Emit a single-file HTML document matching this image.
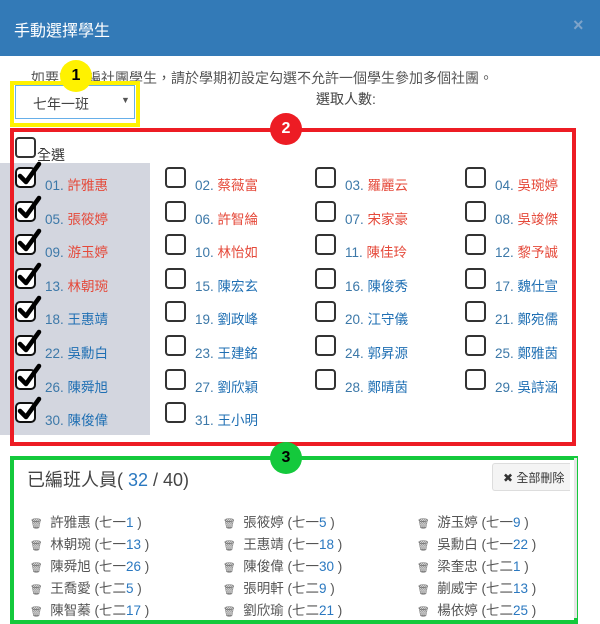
<!DOCTYPE html>
<html><head><meta charset="utf-8"><style>
body{margin:0;width:600px;height:624px;overflow:hidden;background:#fff;font-family:"Liberation Sans","Noto Sans CJK TC",sans-serif;position:relative}
.a{position:absolute}
.hd{left:0;top:0;width:600px;height:56px;background:#337ab7;color:#fff;font-size:16px}
.cb{position:absolute;width:17px;height:17px;border:2px solid #333;border-radius:4px;background:#fff}
.lab{position:absolute;font-size:13.5px;color:#3c78a8;white-space:nowrap}
.r{color:#e5493a}.b{color:#1f6fb3}
.li{position:absolute;font-size:13.5px;color:#555;white-space:nowrap}
.li i{font-style:normal;color:#2a78c0}
.circ{position:absolute;width:32px;height:32px;border-radius:50%;text-align:center;line-height:32px;font-weight:bold;font-size:16px;color:#000}
</style></head><body>
<div class="a hd"><div class="a" style="left:14px;top:17px">手動選擇學生</div><div class="a" style="left:573px;top:15px;color:#7ea3c9;font-size:18px;font-weight:bold">×</div></div>
<div class="a" style="left:31px;top:68px;font-size:14px;color:#555;white-space:nowrap">如要重覆編社團學生，請於學期初設定勾選不允許一個學生參加多個社團。</div>
<div class="a" style="left:10px;top:81px;width:122px;height:38px;border:4px solid #fff200"></div>
<div class="a" style="left:15px;top:85px;width:118px;height:32px;border:1px solid #66afe9;background:#fff"></div>
<div class="a" style="left:33px;top:94px;font-size:14px;color:#444">七年一班</div>
<div class="a" style="left:121px;top:95px;font-size:9px;color:#555">▼</div>
<div class="a" style="left:316px;top:89px;font-size:14px;color:#444">選取人數:</div>
<div class="circ" style="left:60px;top:60px;background:#fff200">1</div>
<div class="a" style="left:0;top:163px;width:150px;height:272px;background:#d3d6df"></div>
<div class="a" style="left:10px;top:128px;width:558px;height:310px;border:4px solid #ed1c24"></div>
<div class="circ" style="left:270px;top:113px;background:#ed1c24;color:#fff">2</div>
<div class="cb" style="left:15px;top:137px"></div><div class="a" style="left:37px;top:145px;font-size:14px;color:#333">全選</div>
<div id="g"></div>
<div class="a" style="left:10px;top:456px;width:560px;height:160px;border:4px solid #14c93c"></div>
<div class="a" style="left:574px;top:458px;width:3px;height:160px;background:#e6e6e6"></div>
<div class="circ" style="left:270px;top:442px;background:#14c93c">3</div>
<div class="a" style="left:27px;top:466px;font-size:18px;color:#444">已編班人員( <span style="color:#2a78c0">32</span> / 40)</div>
<div class="a" style="left:492px;top:463px;width:78px;height:28px;border:1px solid #ddd;border-right:none;border-radius:3px 0 0 3px;background:#f4f4f4;font-size:12px;color:#333;line-height:28px;padding-left:10px;box-sizing:border-box">✖ 全部刪除</div>
<div id="l"></div>
<script>
var n=["許雅惠","蔡薇富","羅麗云","吳琬婷","張筱婷","許智綸","宋家豪","吳竣傑","游玉婷","林怡如","陳佳玲","黎予誠","林朝琬","陳宏玄","陳俊秀","魏仕宣","王惠靖","劉政峰","江守儀","鄭宛儒","吳勳白","王建銘","郭昇源","鄭雅茵","陳舜旭","劉欣穎","鄭晴茵","吳詩涵","陳俊偉","王小明"];
var nums=[1,2,3,4,5,6,7,8,9,10,11,12,13,15,16,17,18,19,20,21,22,23,24,25,26,27,28,29,30,31];
var h="",cx=[15,165,315,465];
for(var i=0;i<30;i++){var r=Math.floor(i/4),c=i%4,y=167+r*33.6;var nn=(nums[i]<10?"0":"")+nums[i];
if(c==0)h+='<svg class="a" style="left:15px;top:'+(y-6)+'px" width="28" height="28" viewBox="0 0 28 28"><rect x="1" y="7" width="19" height="19" rx="4" fill="#fff" stroke="#111" stroke-width="2"/><path d="M5 15 L11 21 L24 3" fill="none" stroke="#000" stroke-width="4.5" stroke-linecap="round" stroke-linejoin="round"/></svg>';
else h+='<div class="cb" style="left:'+cx[c]+'px;top:'+y+'px"></div>';
h+='<div class="lab" style="left:'+(cx[c]+30)+'px;top:'+(y+7)+'px">'+nn+'. <span class="'+(i<13?"r":"b")+'">'+n[i]+'</span></div>';}
document.getElementById("g").innerHTML=h;
var L=["許雅惠 (七一1 )","張筱婷 (七一5 )","游玉婷 (七一9 )","林朝琬 (七一13 )","王惠靖 (七一18 )","吳勳白 (七一22 )","陳舜旭 (七一26 )","陳俊偉 (七一30 )","梁奎忠 (七二1 )","王喬愛 (七二5 )","張明軒 (七二9 )","蒯威宇 (七二13 )","陳智蓁 (七二17 )","劉欣瑜 (七二21 )","楊依婷 (七二25 )"];
h="";var lx=[30,223,417];
for(var i=0;i<15;i++){var r=Math.floor(i/3),c=i%3,y=511+r*22;
h+='<div class="li" style="left:'+lx[c]+'px;top:'+y+'px"><span style="font-size:10px;color:#666">🗑</span>&nbsp; '+L[i].replace(/(\d+)/,'<i>$1</i>')+'</div>';}
document.getElementById("l").innerHTML=h;
</script>
</body></html>
